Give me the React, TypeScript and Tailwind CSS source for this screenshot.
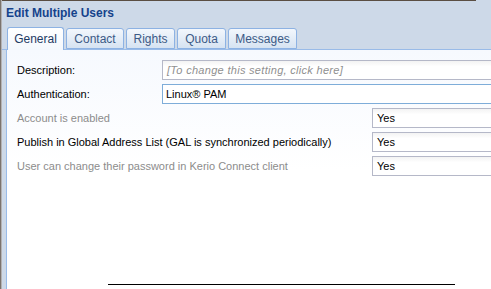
import React from "react";

const font = { fontFamily: '"Liberation Sans", Arial, sans-serif' };

function Tab({ label, w, active }: { label: string; w: string; active?: boolean }) {
  return (
    <div
      className={
        active
          ? `${w} h-[23px] -mb-px flex items-center justify-center border border-b-0 border-[#8db2e3] rounded-t-[3px] bg-gradient-to-b from-white to-[#f4f8fd] text-[12px] text-[#1e3a63]`
          : `${w} h-[21px] flex items-center justify-center border border-[#8db2e3] rounded-t-[3px] bg-gradient-to-b from-[#f3f7fc] to-[#d6e3f2] text-[12px] text-[#3c5a86]`
      }
    >
      {label}
    </div>
  );
}

const field =
  "h-[20px] shrink-0 border border-[#b5b8c8] bg-gradient-to-b from-[#f3f3f3] to-white to-[30%] flex items-center";

export default function App() {
  return (
    <div
      className="w-[491px] h-[289px] overflow-hidden flex bg-[#cdd9e8]"
      style={font}
    >
      <div className="w-[2px] h-full flex shrink-0">
        <div className="w-px h-full bg-[#7b736d]" />
        <div className="w-px h-full bg-[#b4b3b4]" />
      </div>
      <div className="flex-1 flex flex-col min-w-0">
        <div className="w-[474px] h-px bg-[#5a4e43]" />
        <div className="h-[26px] pl-[4px] pt-[4px] text-[12px] leading-[16px] font-bold text-[#15428b]">
          Edit Multiple Users
        </div>
        <div className="h-[23px] flex items-end gap-[2px] pl-[5px] border-b border-[#99bbe8]">
          <Tab label="General" w="w-[57px]" active />
          <Tab label="Contact" w="w-[58px]" />
          <Tab label="Rights" w="w-[49px]" />
          <Tab label="Quota" w="w-[49px]" />
          <Tab label="Messages" w="w-[69px]" />
        </div>
        <div className="flex-1 ml-[4px] border-l border-[#99bbe8] bg-gradient-to-b from-[#f6f9fe] via-white to-white flex flex-col text-[11px] min-w-0 overflow-hidden">
          <div className="pt-[10px] pl-[10px] flex flex-col gap-[4px]">
            <div className="flex items-center h-[20px]">
              <div className="w-[145px] shrink-0 text-black">Description:</div>
              <div className={`${field} w-[340px] pl-[4px] italic text-[#8f8f8f] tracking-[0.3px]`}>
                [To change this setting, click here]
              </div>
            </div>
            <div className="flex items-center h-[20px]">
              <div className="w-[145px] shrink-0 text-black">Authentication:</div>
              <div className="w-[340px] h-[20px] shrink-0 border border-[#7eadd9] bg-white flex items-center pl-[3px] text-black">
                Linux® PAM
              </div>
            </div>
            <div className="flex items-center h-[20px]">
              <div className="w-[355px] shrink-0 text-[#8c8c8c]">Account is enabled</div>
              <div className={`${field} w-[140px] pl-[4px] text-black`}>Yes</div>
            </div>
            <div className="flex items-center h-[20px]">
              <div className="w-[355px] shrink-0 text-black whitespace-nowrap">
                Publish in Global Address List (GAL is synchronized periodically)
              </div>
              <div className={`${field} w-[140px] pl-[4px] text-black`}>Yes</div>
            </div>
            <div className="flex items-center h-[20px]">
              <div className="w-[355px] shrink-0 text-[#8c8c8c] whitespace-nowrap">
                User can change their password in Kerio Connect client
              </div>
              <div className={`${field} w-[140px] pl-[4px] text-black`}>Yes</div>
            </div>
          </div>
          <div className="mt-auto mb-[4px] ml-[101px] w-[347px] h-px bg-black" />
        </div>
      </div>
    </div>
  );
}
